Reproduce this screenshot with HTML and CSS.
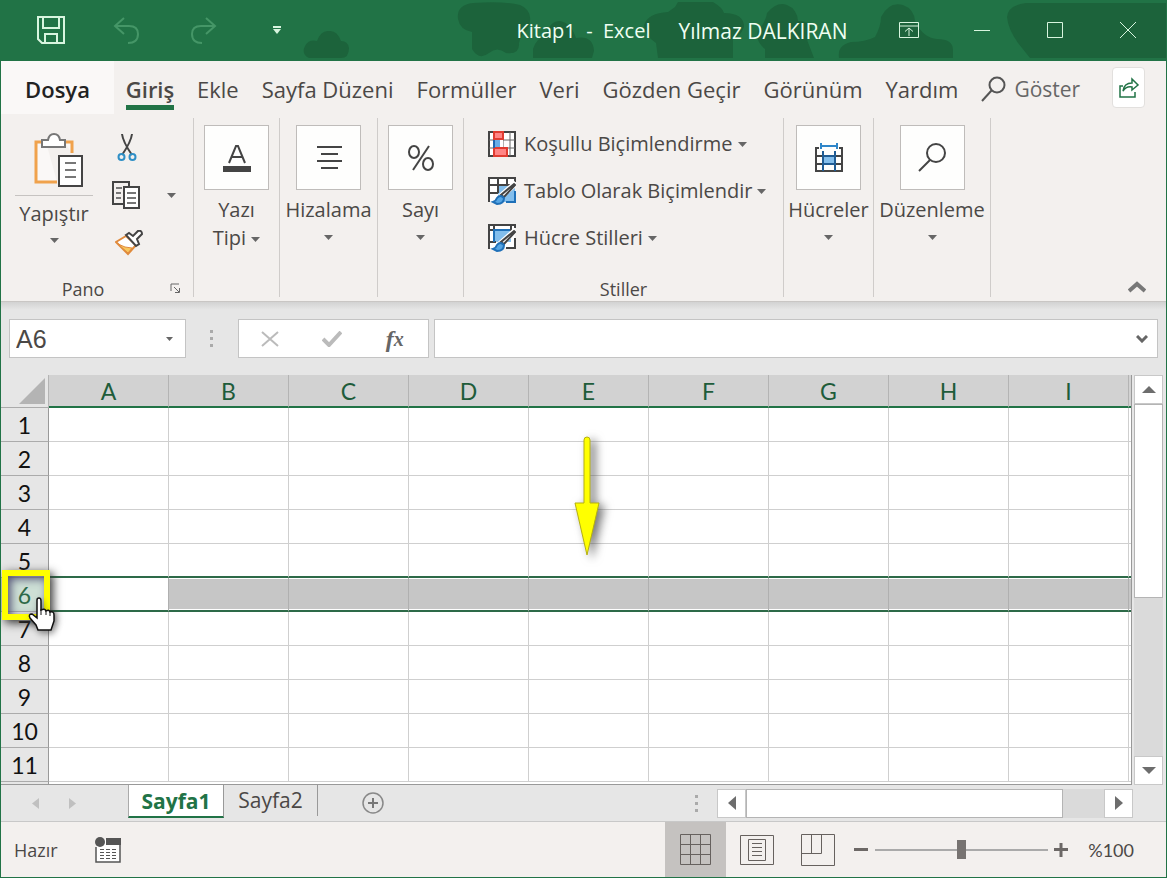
FILE: index.html
```html
<!DOCTYPE html>
<html lang="tr">
<head>
<meta charset="utf-8">
<meta name="viewport" content="width=device-width, initial-scale=1">
<title>Kitap1 - Excel</title>
<link rel="stylesheet" href="styles.css">
</head>
<body>
<div class="window">
  <header class="titlebar">
    <svg class="clouds" width="730" height="58" viewBox="0 0 730 58" aria-hidden="true">
      <path d="M6 57Q-2 53 2 45Q6 38 14 40Q18 29 26 30Q34 29 38 40Q45 40 46 47Q46 57 38 57Z"/>
      <path d="M170 2Q153 4 155 18Q157 29 169 31V48Q176 60 186 52Q194 45 203 52Q217 54 216 42Q218 33 225 28Q232 10 217 4Q200 0 170 2Z"/>
      <path d="M230 57V48Q234 36 242 36Q246 20 257 20Q268 22 273 37Q290 34 291 50L289 57Z"/>
      <path d="M355 57L353 42Q341 34 341 24Q345 12 365 11L372 6L375 1H410Q420 7 421 12Q441 12 441 26Q437 36 430 38V57Z"/>
      <path d="M462 57V48Q452 40 455 30Q463 20 464 12Q474 0 484 4Q494 8 495 20Q508 20 509 28Q501 34 506 44L511 57Z"/>
      <path d="M536 57Q534 44 548 41Q562 41 572 36Q578 25 578 16Q586 0 600 4Q611 8 612 20Q620 37 634 38Q650 38 650 49V57Z"/>
    </svg>
    <svg class="cloud-edge" height="58" viewBox="0 0 160 58" width="160" aria-hidden="true"><path d="M160 2H20Q2 4 1 16Q2 28 12 42L24 57H160Z"/></svg>
    <div class="quick">
      <button aria-label="Kaydet"><svg width="30" height="30" viewBox="0 0 30 30"><path d="M2 2H28V28H6L2 24ZM7 2V13H23V2M9 28V19H21V28"/></svg></button>
      <button aria-label="Geri al" class="dim"><svg width="30" height="30" viewBox="0 0 30 30"><path d="M12 3L3 11L12 19M3 11H17Q26 11 26 19Q26 28 16 28"/></svg></button>
      <button aria-label="Yinele" class="dim"><svg width="30" height="30" viewBox="0 0 30 30"><path d="M18 3L27 11L18 19M27 11H13Q4 11 4 19Q4 28 14 28"/></svg></button>
      <button aria-label="Hızlı erişimi özelleştir"><svg class="drop" width="8" height="8" viewBox="0 0 8 8"><path d="M0 1H8"/><path class="solid" d="M0 3H8L4 8Z"/></svg></button>
    </div>
    <div class="doc-title">Kitap1 &nbsp;-&nbsp; Excel</div>
    <div class="title-right">
      <button class="account">Yılmaz DALKIRAN</button>
      <div class="winbtns">
        <button aria-label="Şerit görüntüleme seçenekleri"><svg width="20" height="16" viewBox="0 0 20 16"><path d="M.5.500H19.500V15.500H.5ZM.5 4H19.500M10 14V6M6 9.500L10 6L14 9.500"/></svg></button>
        <button aria-label="Simge durumuna küçült"><svg width="16" height="16" viewBox="0 0 16 16"><path d="M0 8.500H16"/></svg></button>
        <button aria-label="Ekranı kapla"><svg width="16" height="16" viewBox="0 0 16 16"><path d="M.5.500H15.500V15.500H.5Z"/></svg></button>
        <button aria-label="Kapat"><svg width="16" height="16" viewBox="0 0 16 16"><path d="M0 0L16 16M16 0L0 16"/></svg></button>
      </div>
    </div>
  </header>

  <nav class="tabs">
    <button class="tab file">Dosya</button>
    <button class="tab active">Giriş</button>
    <button class="tab">Ekle</button>
    <button class="tab">Sayfa Düzeni</button>
    <button class="tab">Formüller</button>
    <button class="tab">Veri</button>
    <button class="tab">Gözden Geçir</button>
    <button class="tab">Görünüm</button>
    <button class="tab">Yardım</button>
    <button class="tab tell"><svg width="26" height="26" viewBox="0 0 26 26"><circle cx="16" cy="9" r="7.500"/><path d="M10.500 14.500L1 25"/></svg>Göster</button>
    <button class="share" aria-label="Paylaş"><svg width="22" height="22" viewBox="0 0 22 22"><path d="M5 9H2V20H17V15M5 14Q6 6 14 6V2L20 8L14 13V10Q8 9 5 14Z"/></svg></button>
  </nav>

  <section class="ribbon">
    <div class="group clipboard">
      <div class="clip-body">
        <button class="paste">
          <svg width="50" height="54" viewBox="0 0 50 54"><path d="M13 9H3V49H24M31 9H39V20" stroke="#f0a24c" stroke-width="3" fill="#faf8f7"/><path d="M9 7H15Q16 1 21 1Q26 1 27 7H32V14H9Z" stroke="#777" stroke-width="2" fill="#fff"/><path d="M26 23H49V53H26Z" stroke="#444" stroke-width="2" fill="#fff"/><path d="M32 30H43M32 37H43M32 44H43" stroke="#777" stroke-width="2"/></svg>
          <span class="paste-text">Yapıştır</span>
          <svg class="caret" width="9" height="5" viewBox="0 0 9 5"><path d="M0 0H9L4.500 5Z"/></svg>
        </button>
        <div class="clip-tools">
          <button aria-label="Kes"><svg width="20" height="28" viewBox="0 0 20 28"><path d="M5 1Q6 9 15 22M15 1Q14 9 5 22" stroke="#444" stroke-width="2"/><circle cx="4.500" cy="24" r="3" stroke="#2f8fc6" stroke-width="2"/><circle cx="15.500" cy="24" r="3" stroke="#2f8fc6" stroke-width="2"/></svg></button>
          <button aria-label="Kopyala" class="copy"><svg width="28" height="28" viewBox="0 0 28 28"><path d="M11 23H1V1H17V5" stroke="#444" stroke-width="2"/><path d="M4 7H10M4 12H9M4 17H9" stroke="#777" stroke-width="2"/><path d="M12 6H27V27H12Z" stroke="#444" stroke-width="2" fill="#fff"/><path d="M15 12H24M15 17H24M15 22H24" stroke="#777" stroke-width="2"/></svg></button>
          <button aria-label="Kopyalama seçenekleri" class="copy-more"><svg class="caret" width="9" height="5" viewBox="0 0 9 5"><path d="M0 0H9L4.500 5Z"/></svg></button>
          <button aria-label="Biçim boyacısı"><svg width="28" height="26" viewBox="0 0 28 26"><path d="M11 6L1 12L13 24L21 15Z" fill="#fff" stroke="#e08a3c" stroke-width="2"/><path d="M3 14Q10 18 17 18L13 23Z" fill="#f8c75c" stroke="#e08a3c"/><path d="M11 5L14 3L18 6L23 1Q27 0 27 4L22 9L24 14L21 16Z" fill="#fff" stroke="#444" stroke-width="2"/></svg></button>
        </div>
      </div>
      <div class="group-label">Pano<button class="launcher" aria-label="Pano ayarları"><svg width="11" height="10" viewBox="0 0 11 10"><path d="M1 8V1H9M4 4L9 9M9.500 5V9.500H5" stroke="#666"/></svg></button></div>
    </div>
    <div class="group w86"><button class="big"><span class="tile"><svg width="30" height="30" viewBox="0 0 30 30"><path d="M7 20L14 3H16L23 20M10 14H20" stroke="#444" stroke-width="2"/><path d="M1 23H29V29H1Z" fill="#444"/></svg></span><span>Yazı<br>Tipi <svg class="caret" width="9" height="5" viewBox="0 0 9 5"><path d="M0 0H9L4.500 5Z"/></svg></span></button></div>
    <div class="group w98"><button class="big"><span class="tile"><svg width="26" height="26" viewBox="0 0 26 26"><path d="M1 2H26M5 9H22M1 16H26M5 23H22" stroke="#444" stroke-width="2"/></svg></span><span>Hizalama</span><svg class="caret" width="9" height="5" viewBox="0 0 9 5"><path d="M0 0H9L4.500 5Z"/></svg></button></div>
    <div class="group w86"><button class="big"><span class="tile"><svg width="28" height="28" viewBox="0 0 28 28"><ellipse cx="7" cy="8" rx="5" ry="6" stroke="#444" stroke-width="2"/><ellipse cx="21" cy="20" rx="5" ry="6" stroke="#444" stroke-width="2"/><path d="M22 2L6 26" stroke="#444" stroke-width="2"/></svg></span><span>Sayı</span><svg class="caret" width="9" height="5" viewBox="0 0 9 5"><path d="M0 0H9L4.500 5Z"/></svg></button></div>
    <div class="group styles">
      <div class="style-list">
        <button class="row"><svg width="28" height="26" viewBox="0 0 28 26"><path d="M1 1H27V25H1Z" fill="#fff" stroke="#444" stroke-width="2"/><path d="M1 9H27M1 17H27M6 1V25M15 1V25M22 1V25" stroke="#666"/><path d="M7 9H15V16H7Z" fill="#fff"/><path d="M6 1H15V8H6ZM6 17H19V25H6Z" fill="#ff8585" stroke="#e03c31" stroke-width="2"/><path d="M7 9H12V16H7Z" fill="#69aee8"/><path d="M6 9V17" stroke="#1f66b0" stroke-width="2"/></svg><span>Koşullu Biçimlendirme</span><svg class="caret" width="9" height="5" viewBox="0 0 9 5"><path d="M0 0H9L4.500 5Z"/></svg></button>
        <button class="row"><svg width="28" height="28" viewBox="0 0 28 28"><path d="M1 1H27V25H1Z" fill="#fff"/><path d="M10 8H27V25H10Z" fill="#83beec"/><path d="M1 25V1H27V5M1 8H22M1 16H10M10 1V16M19 1V9" stroke="#444" stroke-width="2"/><path d="M27 14V25H18" stroke="#1f70b8" stroke-width="2"/><path d="M28 6L12 20" stroke="#fff" stroke-width="6"/><path d="M27 8L16 20L13 18L26 7Z" fill="#fff" stroke="#444" stroke-width="2"/><path d="M5 25Q8 24 9 21Q12 17 16 21Q16 27 9 27Z" fill="#55a5e4" stroke="#1f70b8" stroke-width="2"/></svg><span>Tablo Olarak Biçimlendir</span><svg class="caret" width="9" height="5" viewBox="0 0 9 5"><path d="M0 0H9L4.500 5Z"/></svg></button>
        <button class="row"><svg width="28" height="28" viewBox="0 0 28 28"><path d="M1 1H27V24H1Z" fill="#fff"/><path d="M6 6H23V18H6Z" fill="#83beec"/><path d="M1 25V1H27V4M1 6H24M6 1V19M1 18H8M27 14V24H18M23 1V6" stroke="#444" stroke-width="2"/><path d="M6 18V6H22" stroke="#1f70b8" stroke-width="2"/><path d="M28 6L12 20" stroke="#fff" stroke-width="6"/><path d="M27 8L16 20L13 18L26 7Z" fill="#fff" stroke="#444" stroke-width="2"/><path d="M5 25Q8 24 9 21Q12 17 16 21Q16 27 9 27Z" fill="#55a5e4" stroke="#1f70b8" stroke-width="2"/></svg><span>Hücre Stilleri</span><svg class="caret" width="9" height="5" viewBox="0 0 9 5"><path d="M0 0H9L4.500 5Z"/></svg></button>
      </div>
      <div class="group-label">Stiller</div>
    </div>
    <div class="group w90"><button class="big"><span class="tile"><svg width="28" height="30" viewBox="0 0 28 30"><path d="M4 5H1V28H27V5H24M1 13H27M1 21H27" stroke="#444" stroke-width="2"/><path d="M8 13H20V21H8Z" fill="#83beec"/><path d="M6 0V6M22 0V6M6 3H22" stroke="#2f86c9" stroke-width="2"/><path d="M8 8V28M20 8V28M8 13H20M8 21H20" stroke="#1f5c94" stroke-width="2"/></svg></span><span>Hücreler</span><svg class="caret" width="9" height="5" viewBox="0 0 9 5"><path d="M0 0H9L4.500 5Z"/></svg></button></div>
    <div class="group w117"><button class="big"><span class="tile"><svg width="28" height="30" viewBox="0 0 28 30"><circle cx="18" cy="10" r="9" stroke="#444" stroke-width="2"/><path d="M12 17L1 28" stroke="#444" stroke-width="2"/></svg></span><span>Düzenleme</span><svg class="caret" width="9" height="5" viewBox="0 0 9 5"><path d="M0 0H9L4.500 5Z"/></svg></button></div>
    <button class="collapse" aria-label="Şeridi daralt"><svg width="18" height="12" viewBox="0 0 18 12"><path d="M1 10L9 3L17 10" stroke="#777" stroke-width="4"/></svg></button>
  </section>

  <section class="formula-bar">
    <div class="namebox"><input aria-label="Ad kutusu" value="A6"><button aria-label="Adlar"><svg class="caret" width="7" height="4" viewBox="0 0 9 5"><path d="M0 0H9L4.500 5Z"/></svg></button></div>
    <span class="dots" aria-hidden="true"><i></i><i></i><i></i></span>
    <div class="fx-buttons">
      <button aria-label="İptal"><svg width="18" height="16" viewBox="0 0 18 16"><path d="M1 1L17 15M17 1L1 15" stroke="#bbb" stroke-width="2"/></svg></button>
      <button aria-label="Gir"><svg width="20" height="16" viewBox="0 0 20 16"><path d="M1 8L7 14L19 1" stroke="#bbb" stroke-width="4"/></svg></button>
      <button aria-label="İşlev ekle" class="fx">f<small>x</small></button>
    </div>
    <div class="formula"><input aria-label="Formül çubuğu"><button aria-label="Formül çubuğunu genişlet"><svg width="12" height="8" viewBox="0 0 12 8"><path d="M1 1L6 6L11 1" stroke="#666" stroke-width="3"/></svg></button></div>
  </section>

  <main class="work">
    <div class="grid">
      <table>
        <colgroup><col class="c-head"><col span="9" class="c-data"><col></colgroup>
        <thead><tr><th class="corner"><svg width="26" height="26" viewBox="0 0 26 26"><path d="M26 0V26H0Z" fill="#b4b4b4"/></svg></th><th>A</th><th>B</th><th>C</th><th>D</th><th>E</th><th>F</th><th>G</th><th>H</th><th>I</th><th class="rest"></th></tr></thead>
        <tbody>
          <tr><th>1</th><td></td><td></td><td></td><td></td><td></td><td></td><td></td><td></td><td></td><td></td></tr>
          <tr><th>2</th><td></td><td></td><td></td><td></td><td></td><td></td><td></td><td></td><td></td><td></td></tr>
          <tr><th>3</th><td></td><td></td><td></td><td></td><td></td><td></td><td></td><td></td><td></td><td></td></tr>
          <tr><th>4</th><td></td><td></td><td></td><td></td><td></td><td></td><td></td><td></td><td></td><td></td></tr>
          <tr class="above"><th>5</th><td></td><td></td><td></td><td></td><td></td><td></td><td></td><td></td><td></td><td></td></tr>
          <tr class="selected"><th>6<span class="marker"></span><svg class="hand" width="30" height="36" viewBox="0 0 30 36" aria-hidden="true"><path d="M9 3Q9 1 11 1Q13 1 13 4V13Q17 11 18 14Q21 12 22 15Q26 14 26 18V24L23 33H10L8 28L2 21Q0 17 4 17L9 21Z" fill="#fff" stroke="#111" stroke-width="1.500"/><path d="M13 12V18M18 13V18M22 15V19" stroke="#111" fill="none"/></svg></th><td></td><td></td><td></td><td></td><td></td><td></td><td></td><td></td><td></td><td></td></tr>
          <tr><th>7</th><td></td><td></td><td></td><td></td><td></td><td></td><td></td><td></td><td></td><td></td></tr>
          <tr><th>8</th><td></td><td></td><td></td><td></td><td></td><td></td><td></td><td></td><td></td><td></td></tr>
          <tr><th>9</th><td></td><td></td><td></td><td></td><td></td><td></td><td></td><td></td><td></td><td></td></tr>
          <tr><th>10</th><td></td><td></td><td></td><td></td><td></td><td></td><td></td><td></td><td></td><td></td></tr>
          <tr><th>11</th><td></td><td></td><td></td><td></td><td></td><td></td><td></td><td></td><td></td><td></td></tr>
        </tbody>
      </table>
      <svg class="arrow" width="26" height="120" viewBox="0 0 26 120" aria-hidden="true"><path d="M10 4Q10 1 13 1Q16 1 16 4V67H25L13 119L1 67H10Z" fill="#ff0" stroke="#b5b010" stroke-width="1"/></svg>
    </div>
    <div class="vscroll">
      <button aria-label="Yukarı kaydır"><svg width="14" height="7" viewBox="0 0 14 7"><path d="M7 0L14 7H0Z"/></svg></button>
      <div class="thumb"></div><div class="track"></div>
      <button aria-label="Aşağı kaydır"><svg width="14" height="7" viewBox="0 0 14 7"><path d="M0 0H14L7 7Z"/></svg></button>
    </div>
  </main>

  <div class="sheetbar">
    <div class="sheet-nav">
      <button aria-label="Önceki sayfa"><svg width="7" height="11" viewBox="0 0 7 11"><path d="M7 0V11L0 5.500Z"/></svg></button>
      <button aria-label="Sonraki sayfa"><svg width="7" height="11" viewBox="0 0 7 11"><path d="M0 0V11L7 5.500Z"/></svg></button>
    </div>
    <button class="sheet current">Sayfa1</button>
    <button class="sheet">Sayfa2</button>
    <button class="add" aria-label="Yeni sayfa"><svg width="22" height="22" viewBox="0 0 22 22"><circle cx="11" cy="11" r="10" stroke="#888" stroke-width="1.500"/><path d="M11 6V16M6 11H16" stroke="#777" stroke-width="2"/></svg></button>
    <span class="dots" aria-hidden="true"><i></i><i></i><i></i></span>
    <div class="hscroll">
      <button aria-label="Sola kaydır"><svg width="8" height="14" viewBox="0 0 8 14"><path d="M8 0V14L0 7Z"/></svg></button>
      <div class="thumb"></div><div class="track"></div>
      <button aria-label="Sağa kaydır"><svg width="8" height="14" viewBox="0 0 8 14"><path d="M0 0V14L8 7Z"/></svg></button>
    </div>
  </div>

  <footer class="status">
    <span class="ready">Hazır</span>
    <button class="macro" aria-label="Makro kaydet"><svg width="26" height="26" viewBox="0 0 26 26"><path d="M1 10V25H25V2H11" stroke="#555" stroke-width="1.500" fill="#fff"/><path d="M11 1H26V8H11Z" fill="#555"/><circle cx="5" cy="5" r="5" fill="#555"/><path d="M5 12.500H21M5 15.500H21M5 18.500H21M5 21.500H21" stroke="#555" stroke-dasharray="4 2"/></svg></button>
    <div class="views">
      <button class="view on" aria-label="Normal"><svg width="31" height="31" viewBox="0 0 31 31"><path d="M.5.500H30.500V30.500H.5ZM.5 10.500H30.500M.5 20.500H30.500M10.500.500V30.500M20.500.500V30.500"/></svg></button>
      <button class="view" aria-label="Sayfa düzeni"><svg width="34" height="30" viewBox="0 0 34 30"><path d="M.5.500H33.500V29.500H.5ZM8.500 4.500H25.500V25.500H8.500ZM12 8.500H22M12 12.500H22M12 16.500H22M12 20.500H22"/></svg></button>
      <button class="view" aria-label="Sayfa sonu önizleme"><svg width="34" height="32" viewBox="0 0 34 32"><path d="M.5.500H33.500V31.500H.5ZM.5 19.500H20.500V.5M10.500.500V19.500"/></svg></button>
    </div>
    <button class="zoom" aria-label="Uzaklaştır"><svg width="14" height="14" viewBox="0 0 14 14"><path d="M0 6.500H14"/></svg></button>
    <input class="slider" type="range" min="0" max="200" value="100" aria-label="Yakınlaştırma">
    <button class="zoom" aria-label="Yakınlaştır"><svg width="14" height="14" viewBox="0 0 14 14"><path d="M0 6.500H14M7 0V14"/></svg></button>
    <button class="percent">%100</button>
  </footer>
</div>
</body>
</html>
```
FILE: styles.css
```css
* { box-sizing: border-box; }
html, body { height: 100%; }
body { margin: 0; font: 20px/28px "Open Sans", "Noto Sans", sans-serif; color: #4b4846; }
button, input { font: inherit; color: inherit; background: none; border: 0; padding: 0; margin: 0; }
button { display: flex; align-items: center; justify-content: center; white-space: nowrap; }
svg { display: block; fill: none; flex: none; }
.caret { fill: #666; }

.window { min-height: 100%; display: flex; flex-direction: column; border: 1px solid #217346; background: #f3f0ee; overflow: hidden; }

.titlebar { position: relative; display: grid; grid-template-columns: 1fr auto 1fr; align-items: center; height: 60px; padding-bottom: 2px; background: #217346; color: #effff2; }
.titlebar > div { position: relative; }
.titlebar svg { stroke: #d8f5df; }
.titlebar .clouds, .titlebar .cloud-edge { position: absolute; top: 0; fill: #1c633b; stroke: none; }
.titlebar .clouds { left: 302px; }
.titlebar .cloud-edge { right: 0; }
.quick { display: flex; padding-left: 12px; }
.quick button { width: 76px; height: 54px; }
.quick svg { stroke-width: 2; }
.quick .dim svg { stroke: #459667; }
.quick .drop { margin-right: 4px; }
.quick .solid { fill: #d8f5df; stroke: none; }
.doc-title { padding-top: 2px; }
.title-right { display: flex; align-items: center; justify-content: space-between; padding: 0 2px 0 28px; }
.account { font-size: 21px; padding-top: 2px; }
.winbtns { display: flex; }
.winbtns button { width: 73px; height: 58px; }

.tabs { display: flex; align-items: stretch; gap: 1px; height: 53px; font-size: 22px; }
.tab { padding: 2px 11px 0; }
.tab.file { width: 113px; background: #faf8f7; color: #222; font-weight: 600; }
.tab.active { width: 70px; font-weight: 600; background: linear-gradient(#217346, #217346) no-repeat center 44px / 48px 5px; }
.tab.tell { gap: 7px; color: #666; font-size: 21px; }
.tell svg { stroke: #555; stroke-width: 2; }
.share { width: 33px; height: 41px; margin: 6px 21px 0 auto; background: #fff; border: 1px solid #e2e0de; border-radius: 4px; }
.share svg { stroke: #217346; stroke-width: 1.5px; }

.ribbon { display: flex; height: 188px; padding: 4px 0; border-bottom: 1px solid #c9c6c4; }
.group { display: flex; flex-direction: column; border-right: 1px solid #cfccca; }
.w86 { width: 86px; } .w98 { width: 98px; } .w90 { width: 90px; } .w117 { width: 117px; }
.clipboard { width: 193px; }
.clip-body { display: flex; flex: 1; }
.paste { flex-direction: column; justify-content: flex-start; width: 94px; padding: 15px 0 0 12px; }
.paste svg:first-child { margin-left: 8px; }
.paste-text { margin: 8px 0 10px; padding-top: 4px; border-top: 1px solid #c6c3c1; width: 78px; }
.clip-tools { display: grid; grid-template: 48px 48px 48px / 60px 28px; padding: 5px 0 0 2px; }
.clip-tools button { grid-column: 1; }
.clip-tools .copy { grid-row: 2; padding-right: 2px; }
.clip-tools .copy-more { grid-area: 2 / 2; padding-left: 0; }
.clip-tools button:last-child { padding-left: 4px; }
.group-label { position: relative; margin-top: auto; height: 16px; font-size: 18px; line-height: 16px; text-align: center; }
.clipboard .group-label { padding-right: 28px; }
.launcher { position: absolute; right: 12px; top: 1px; width: 12px; height: 12px; }
.big { flex-direction: column; padding-top: 7px; }
.tile { display: flex; align-items: center; justify-content: center; width: 65px; height: 65px; margin-bottom: 6px; border: 1px solid #bfbcba; background: #fefefd; }
.big > .caret { margin-top: 11px; }
.big span .caret { display: inline-block; vertical-align: middle; }
.styles { width: 320px; }
.style-list { display: flex; flex-direction: column; align-items: flex-start; gap: 3px; padding: 4px 0 0 24px; }
.row { height: 44px; gap: 8px; }
.row .caret { margin-left: -3px; }
.collapse { align-self: flex-end; margin: 0 18px 0 auto; width: 22px; height: 20px; }

.formula-bar { display: flex; align-items: center; height: 73px; padding: 0 8px; background: linear-gradient(#d2d2d2, #e6e6e6 8px); }
.namebox, .fx-buttons, .formula { display: flex; height: 39px; border: 1px solid #c4c4c4; background: #fff; }
.namebox { width: 177px; }
.namebox input { width: 144px; padding-left: 6px; font: 25px/28px "Liberation Sans", Arial, sans-serif; }
.namebox button { width: 30px; }
.dots { display: flex; flex-direction: column; gap: 4px; width: 4px; margin: 0 24px; }
.dots i { width: 3px; height: 3px; background: #aaa; }
.fx-buttons { width: 191px; padding-right: 2px; }
.fx-buttons button { flex: 1; }
.fx-buttons .fx { font: italic bold 24px/28px "Liberation Serif", serif; color: #666; }
.fx small { font-size: 20px; }
.formula { flex: 1; margin-left: 5px; }
.formula input { flex: 1; min-width: 0; padding: 0 8px; }
.formula button { width: 30px; }

.work { flex: 1; display: flex; background: #e6e6e6; }
.grid { position: relative; flex: 1; min-width: 0; overflow: hidden; border: solid #999; border-width: 0 1px 1px 0; background: linear-gradient(#999, #999) no-repeat 47px 0 / 1px 100%, linear-gradient(90deg, #e6e6e6 47px, #fff 47px); }
table { width: 100%; table-layout: fixed; border-collapse: separate; border-spacing: 0; font-family: "Lato", sans-serif; font-size: 23px; line-height: 28px; }
.c-head { width: 48px; } .c-data { width: 120px; }
th, td { height: 34px; padding: 0; border: solid #cfcfcf; border-width: 0 1px 1px 0; }
td:last-child { border-right: 0; }
thead th { height: 33px; background: #d2d2d2; color: #1e5c3a; font-weight: 400; border-right-color: #b4b4b4; border-bottom: 2px solid #217346; }
thead .rest { border-right: 0; }
thead .corner { background: #e6e6e6; border-bottom: 1px solid #ababab; padding: 3px; }
.corner svg { margin-left: auto; }
tbody th { position: relative; background: #e6e6e6; color: #111; font-weight: 400; border-color: #ababab; border-right-color: #999; }
.above td { border-bottom: 2px solid #2d6a48; }
.selected td { background: #c6c6c6; border-right-color: #b0b0b0; border-bottom: 2px solid #2d6a48; box-shadow: inset 0 1px #fff, inset 0 -1px #fff; }
.selected td:nth-child(2) { background: #fff; }
.selected th { background: #cddfd5; color: #2d6a48; z-index: 2; }
.marker { position: absolute; left: 1px; top: -8px; width: 48px; height: 50px; border: 6px solid #ff0; box-shadow: 3px 3px 9px #333, inset 3px 3px 9px #557; }
.hand { position: absolute; left: 27px; top: 19px; filter: drop-shadow(2px 3px 3px #0006); }
.arrow { position: absolute; left: 573px; top: 61px; filter: drop-shadow(5px 3px 5px #444b); }

.vscroll { display: flex; flex-direction: column; width: 34px; padding: 0 3px 0 2px; }
.vscroll button, .hscroll button { width: 29px; height: 29px; flex: none; background: #fff; border: 1px solid #c8c8c8; }
.vscroll svg, .hscroll svg { fill: #6d6d6d; }
.thumb { background: #fff; border: 1px solid #b4b4b4; }
.track { background: #dadada; }
.vscroll .thumb { flex: 194; width: 29px; }
.vscroll .track { flex: 159; width: 29px; }

.sheetbar { display: flex; align-items: center; height: 37px; padding-right: 33px; background: #e6e6e6; border-bottom: 1px solid #c8c8c8; }
.sheet-nav { display: flex; width: 127px; padding-left: 16px; }
.sheet-nav button { width: 37px; height: 30px; }
.sheet-nav svg { fill: #c0c0c0; }
.sheet { align-self: flex-start; height: 31px; width: 94px; border-right: 1px solid #999; padding-bottom: 2px; font-size: 21px; }
.sheet.current { width: 96px; height: 33px; padding: 0; background: #fff; border-left: 1px solid #aaa; border-bottom: 2px solid #217346; color: #217346; font-weight: 700; }
.add { margin-left: 44px; width: 22px; height: 22px; }
.sheetbar .dots { margin: 0 18px 0 auto; }
.hscroll { display: flex; width: 416px; height: 29px; }
.hscroll .thumb { flex: 318; }
.hscroll .track { flex: 41; }

.status { display: flex; align-items: center; height: 55px; padding: 0 32px 0 13px; background: #f3f0ee; font-size: 18px; }
.macro { margin-left: 37px; }
.views { display: flex; align-self: stretch; margin-left: auto; }
.view { width: 61px; }
.view svg { stroke: #66615e; }
.view.on { background: #c5c2c0; }
.zoom { width: 14px; height: 14px; margin-left: 6px; }
.zoom svg { stroke: #6c6866; stroke-width: 3; }
.slider { appearance: none; width: 173px; height: 20px; margin: 0 0 0 7px; background: linear-gradient(#aaa, #aaa) no-repeat center / 100% 2px; }
.slider::-webkit-slider-thumb { appearance: none; width: 9px; height: 19px; border: 0; border-radius: 0; background: #777371; }
.percent { margin-left: 20px; font-family: "Lato", sans-serif; }
```
